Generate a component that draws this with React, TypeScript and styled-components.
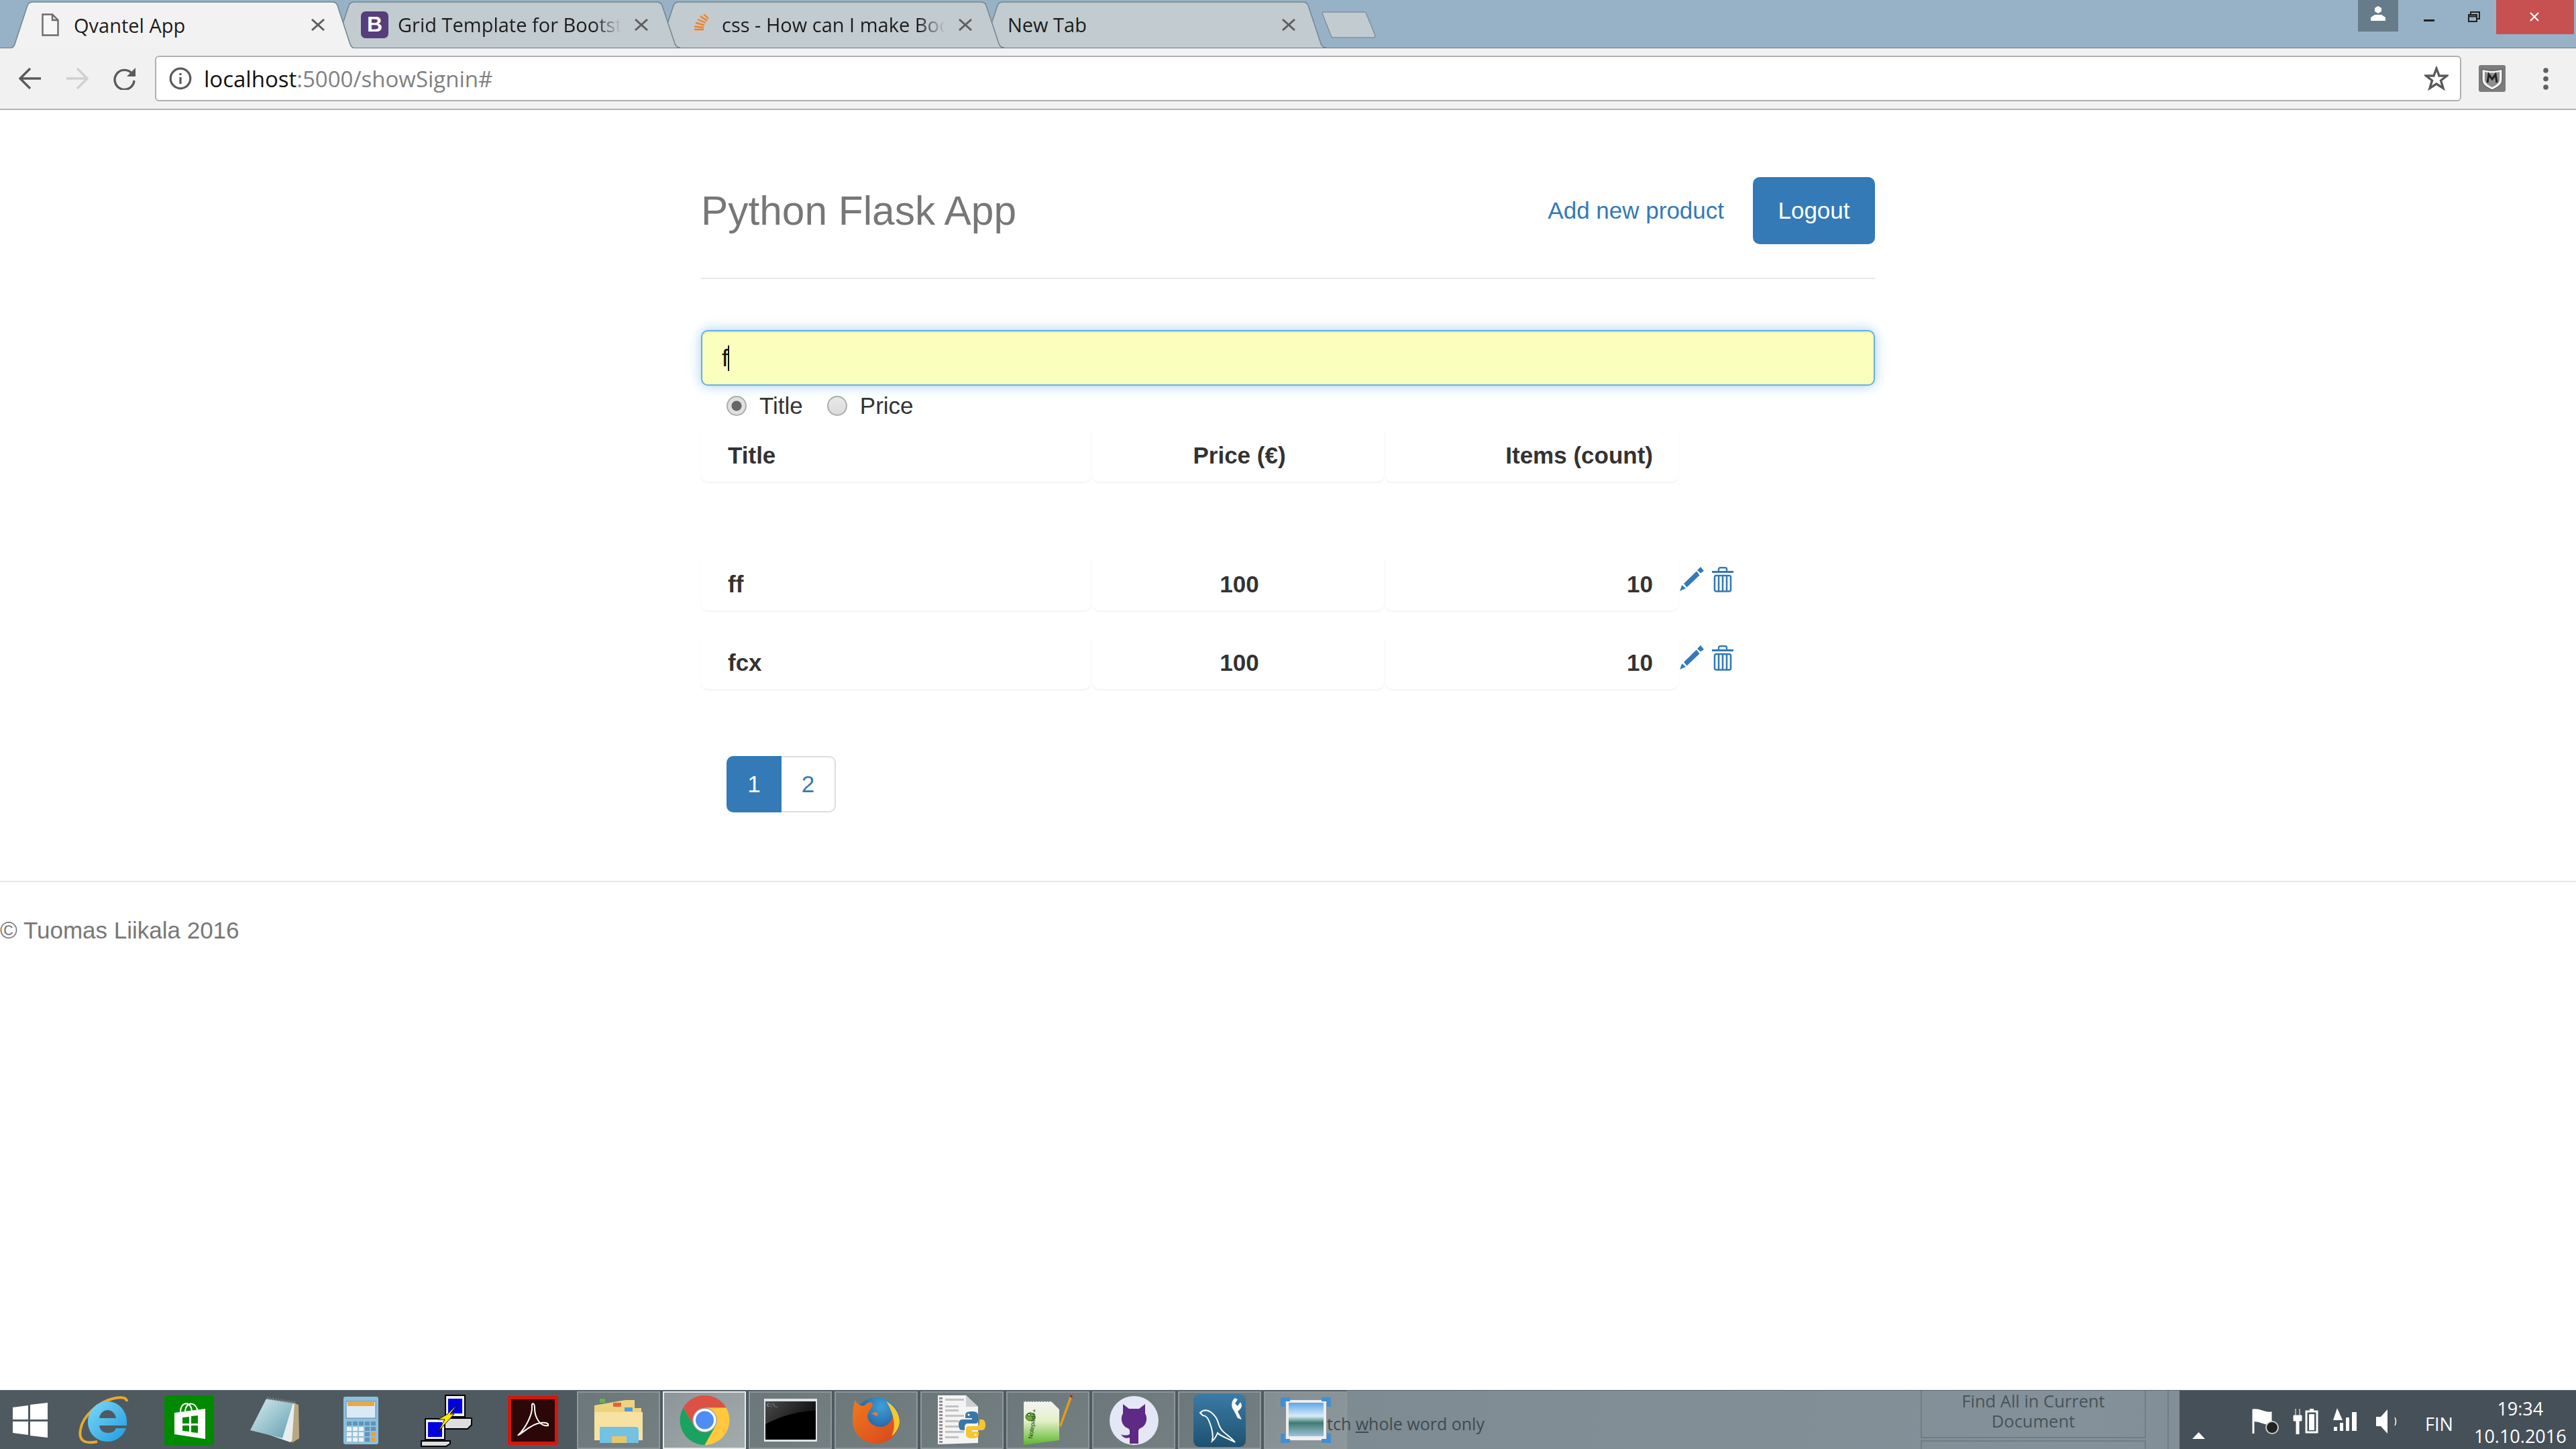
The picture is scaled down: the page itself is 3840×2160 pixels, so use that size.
import React from 'react';
import styled, { createGlobalStyle } from 'styled-components';

const Global = createGlobalStyle`
  html, body { margin: 0; padding: 0; background: #fff; }
  body { font-family: "Liberation Sans", Arial, sans-serif; color: #333; }
`;

const CHROME_FONT = '"Open Sans", "Noto Sans", sans-serif';

const Screen = styled.div`
  width: 3840px;
  height: 2160px;
  display: flex;
  flex-direction: column;
  overflow: hidden;
  background: #fff;
`;

/* ---------- browser chrome ---------- */

const TitleBar = styled.div`
  height: 71px;
  flex: none;
  display: flex;
  justify-content: space-between;
  align-items: flex-start;
  background: #97b2c6;
  border-bottom: 1px solid #67798a;
`;

const TabStrip = styled.div`
  height: 71px;
  display: flex;
  align-items: flex-end;
  padding-left: 14px;
`;

const Tab = styled.div<{ $w: number; $pad: number; $right: number; $z: number; $first?: boolean; $active?: boolean }>`
  position: relative;
  z-index: ${({ $z }) => $z};
  width: ${({ $w }) => $w}px;
  height: ${({ $active }) => ($active ? 70 : 69)}px;
  margin-left: ${({ $first }) => ($first ? 0 : -37)}px;
  margin-bottom: ${({ $active }) => ($active ? -1 : 0)}px;
  padding-left: ${({ $pad }) => $pad}px;
  padding-right: ${({ $right }) => $right}px;
  box-sizing: border-box;
  display: flex;
  align-items: center;
  font-family: ${CHROME_FONT};
  font-size: 29px;
  color: #1c1c1c;
`;

const TabShape = styled.svg`
  position: absolute;
  left: 0;
  top: 0;
`;

const TabTitle = styled.span<{ $fade?: boolean }>`
  position: relative;
  flex: 1;
  min-width: 0;
  white-space: nowrap;
  overflow: hidden;
  ${({ $fade }) =>
    $fade &&
    `-webkit-mask-image: linear-gradient(to right, #000 88%, transparent 100%);
     mask-image: linear-gradient(to right, #000 88%, transparent 100%);`}
`;

const TabClose = styled.svg`
  position: relative;
  flex: none;
  margin-left: 20px;
`;

const TabIcon = styled.svg<{ $gap: number }>`
  position: relative;
  flex: none;
  margin-right: ${({ $gap }) => $gap}px;
`;

const BootstrapMark = styled.span`
  position: relative;
  flex: none;
  width: 41px;
  height: 40px;
  margin-right: 14px;
  border-radius: 7px;
  background: #563d7c;
  color: #fff;
  display: flex;
  align-items: center;
  justify-content: center;
  font-family: "Liberation Sans", sans-serif;
  font-weight: 700;
  font-size: 32px;
`;

const NewTab = styled.svg`
  position: relative;
  z-index: 0;
  margin-left: -7px;
  margin-bottom: 14px;
`;

const WindowControls = styled.div`
  display: flex;
  align-items: flex-start;
  padding-right: 3px;
`;

const ProfileBox = styled.div`
  width: 60px;
  height: 47px;
  background: #677c8a;
  display: flex;
  justify-content: center;
  padding-top: 9px;
  box-sizing: border-box;
`;

const WinButton = styled.div<{ $w: number; $top: number; $left: number }>`
  width: ${({ $w }) => $w}px;
  height: 51px;
  box-sizing: border-box;
  padding: ${({ $top }) => $top}px 0 0 ${({ $left }) => $left}px;
  display: flex;
  align-items: flex-start;
`;

const CloseButton = styled(WinButton)`
  background: #c75050;
`;

const Toolbar = styled.div`
  height: 90px;
  flex: none;
  display: flex;
  align-items: center;
  padding-left: 28px;
  background: #f1f1f1;
  border-bottom: 2px solid #b3b3b3;
`;

const NavIcon = styled.svg`
  flex: none;
  margin-right: 36px;
`;

const Omnibox = styled.div`
  width: 3438px;
  height: 68px;
  margin-left: -8px;
  box-sizing: border-box;
  flex: none;
  display: flex;
  align-items: center;
  padding: 0 17px 0 19px;
  background: #fff;
  border: 2px solid #b0b0b0;
  border-radius: 6px;
`;

const Url = styled.span`
  flex: 1;
  margin-left: 18px;
  font-family: ${CHROME_FONT};
  font-size: 33px;
  color: #808080;
  white-space: nowrap;
`;

const Host = styled.span`
  color: #111;
`;

const ToolRight = styled.div`
  display: flex;
  align-items: center;
  margin-left: 26px;
`;

const MenuDots = styled.svg`
  margin-left: 56px;
`;

/* ---------- page ---------- */

const Page = styled.div`
  flex: 1;
  display: flex;
  flex-direction: column;
`;

const Container = styled.div`
  width: 1750px;
  margin: 0 auto;
`;

const Header = styled.header`
  padding: 100px 0 50px;
  display: flex;
  align-items: center;
  justify-content: space-between;
  border-bottom: 2px solid #e8e8e8;
`;

const Brand = styled.h3`
  margin: 0;
  font-size: 60.4px;
  font-weight: 400;
  color: #777;
`;

const Nav = styled.nav`
  display: flex;
  align-items: center;
  gap: 43px;
`;

const NavLink = styled.a`
  font-size: 35px;
  color: #337ab7;
`;

const LogoutButton = styled.a`
  width: 182px;
  height: 100px;
  display: flex;
  align-items: center;
  justify-content: center;
  background: #337ab7;
  border-radius: 10px;
  color: #fff;
  font-size: 35px;
`;

const SearchBox = styled.div`
  height: 83px;
  margin-top: 76px;
  box-sizing: border-box;
  padding-left: 29px;
  display: flex;
  align-items: center;
  background: #faffbd;
  border: 2px solid #66afe9;
  border-radius: 10px;
  box-shadow: inset 0 2px 2px rgba(0, 0, 0, 0.07), 0 0 18px rgba(102, 175, 233, 0.6);
  font-size: 35px;
  color: #111;
`;

const Caret = styled.span`
  width: 2px;
  height: 38px;
  margin-left: -1px;
  background: #111;
`;

const RadioRow = styled.div`
  height: 31px;
  margin-top: 14px;
  padding-left: 38px;
  display: flex;
  align-items: center;
  font-size: 35px;
  color: #333;
`;

const Radio = styled.span<{ $checked?: boolean }>`
  width: 30px;
  height: 30px;
  flex: none;
  box-sizing: border-box;
  margin-right: 19px;
  border-radius: 50%;
  border: 2px solid #adadad;
  background: ${({ $checked }) =>
    $checked
      ? 'radial-gradient(circle, #666 0 7px, #e0e0e0 8px)'
      : 'linear-gradient(#e9e9e9, #dadada)'};
`;

const RadioLabel = styled.span`
  margin-right: 36px;
`;

const Row = styled.div<{ $top: number }>`
  display: grid;
  grid-template-columns: 581px 435px 437px auto;
  column-gap: 2px;
  margin-top: ${({ $top }) => $top}px;
`;

const Cell = styled.div<{ $align: 'left' | 'center' | 'right' }>`
  height: 82px;
  box-sizing: border-box;
  padding: 3px ${({ $align }) => ($align === 'right' ? 38 : $align === 'center' ? 38 : 40)}px 0
    ${({ $align }) => ($align === 'center' ? 42 : 40)}px;
  display: flex;
  align-items: center;
  justify-content: ${({ $align }) =>
    $align === 'left' ? 'flex-start' : $align === 'center' ? 'center' : 'flex-end'};
  background: #fff;
  border-radius: 10px;
  box-shadow: 0 2px 3px rgba(0, 0, 0, 0.05);
  font-size: 35px;
  font-weight: 700;
  color: #333;
`;

const Actions = styled.div`
  height: 82px;
  display: flex;
  align-items: flex-start;
  gap: 12px;
  padding-top: 17px;
  box-sizing: border-box;
`;

const ActionIcon = styled.svg`
  flex: none;
`;

const Pagination = styled.div`
  display: flex;
  margin: 100px 0 0 38px;
  height: 84px;
  width: 163px;
`;

const PageLink = styled.a<{ $active?: boolean }>`
  flex: ${({ $active }) => ($active ? '0 0 82px' : '1')};
  display: flex;
  align-items: center;
  justify-content: center;
  box-sizing: border-box;
  font-size: 35px;
  color: ${({ $active }) => ($active ? '#fff' : '#337ab7')};
  background: ${({ $active }) => ($active ? '#337ab7' : '#fff')};
  border: 2px solid ${({ $active }) => ($active ? '#337ab7' : '#ddd')};
  border-left-width: ${({ $active }) => ($active ? 2 : 0)}px;
  border-radius: ${({ $active }) => ($active ? '10px 0 0 10px' : '0 10px 10px 0')};
`;

const Footer = styled.footer`
  margin-top: 102px;
  border-top: 2px solid #e5e5e5;
  padding-top: 48px;
  font-size: 35px;
  line-height: 48px;
  color: #777;
`;

/* ---------- taskbar ---------- */

const Taskbar = styled.div`
  height: 88px;
  flex: none;
  display: flex;
  border-top: 1px solid #5f6a70;
  box-sizing: border-box;
`;

const TaskList = styled.div`
  width: 2008px;
  flex: none;
  display: flex;
  gap: 4px;
  background: #4e5a60;
  padding-top: 1px;
`;

const StartSlot = styled.div`
  width: 88px;
  flex: none;
  box-sizing: border-box;
  display: flex;
  align-items: center;
  justify-content: center;
  padding-left: 2px;
`;

const TILE_BG = {
  idle: 'transparent',
  open: 'linear-gradient(135deg, #6c777b, #747f81)',
  active: 'linear-gradient(135deg, #8c9598, #a3abad)',
  peek: 'linear-gradient(135deg, #838e93, #8d989c)',
};

const Tile = styled.div<{ $tone: keyof typeof TILE_BG }>`
  width: 124px;
  flex: none;
  box-sizing: border-box;
  display: flex;
  align-items: center;
  justify-content: center;
  background: ${({ $tone }) => TILE_BG[$tone]};
  border: ${({ $tone }) =>
    $tone === 'idle'
      ? 'none'
      : $tone === 'active'
        ? '2px solid #e6e9ea'
        : '2px solid #8e989b'};
`;

const Backdrop = styled.div`
  flex: 1;
  display: flex;
  background: linear-gradient(100deg, #7e8b92, #84919a 60%, #76848c);
  font-family: ${CHROME_FONT};
  color: #475359;
`;

const PeekText = styled.span`
  position: relative;
  margin: 32px 0 0 -30px;
  width: 885px;
  flex: none;
  font-size: 25px;
  white-space: nowrap;
  color: #3f4a50;
  u { text-decoration: underline; }
`;

const FindColumn = styled.div`
  width: 336px;
  flex: none;
  display: flex;
  flex-direction: column;
  gap: 3px;
`;

const FindBox = styled.div`
  height: 71px;
  box-sizing: border-box;
  border: 2px solid #707d84;
  border-top: none;
  font-size: 25.5px;
  line-height: 30px;
  text-align: center;
`;

const FindStub = styled.div`
  flex: 1;
  border: 2px solid #707d84;
  border-bottom: none;
`;

const SideRule = styled.div`
  width: 2px;
  flex: none;
  margin-left: 32px;
  background: #707d84;
`;

const Tray = styled.div`
  margin-left: auto;
  width: 591px;
  flex: none;
  display: flex;
  background: #465058;
  color: #fff;
  font-family: ${CHROME_FONT};
`;

const TrayGlyph = styled.svg<{ $left: number; $top: number }>`
  flex: none;
  margin: ${({ $top }) => $top}px 0 0 ${({ $left }) => $left}px;
`;

const TrayLang = styled.span`
  margin: 31px 0 0 39px;
  font-size: 27px;
`;

const Clock = styled.div`
  margin: 6px 0 0 31px;
  width: 138px;
  text-align: center;
  font-size: 27px;
  line-height: 41px;
`;

/* ---------- drawings ---------- */

const tabPath = (w: number, h: number) =>
  `M0 ${h} Q6 ${h} 8 ${h - 6} L27 6 Q29 1 35 1 H${w - 35} Q${w - 29} 1 ${w - 27} 6 L${w - 8} ${h - 6} Q${w - 6} ${h} ${w} ${h}`;

const CloseX = ({ color = '#5f5f5f' }: { color?: string }) => (
  <TabClose width="20" height="18" viewBox="0 0 20 18">
    <path d="M1 1 L19 17 M19 1 L1 17" stroke={color} strokeWidth="3" fill="none" />
  </TabClose>
);

const TaskIE = () => (
  <svg width="74" height="72" viewBox="0 0 74 72">
    <defs>
      <linearGradient id="ie" x1="0" y1="0" x2="1" y2="1">
        <stop offset="0" stopColor="#7fd8f7" />
        <stop offset="1" stopColor="#1c9be0" />
      </linearGradient>
    </defs>
    <path d="M28 68 C8 72 0 66 3 50 C6 30 30 8 55 3 C66 1 72 3 72 8" fill="none" stroke="#e6a92e" strokeWidth="4" />
    <path
      fillRule="evenodd"
      d="M14 38 A29 30 0 0 1 72 38 V44 H31 C32 52 38 55 44 55 C50 55 54 53 56 48 H71 C67 60 56 68 44 68 C26 68 14 55 14 38 Z M31 33 H56 C55 26 50 21 43.5 21 C37 21 32 26 31 33 Z"
      fill="url(#ie)"
    />
  </svg>
);

const TaskStore = () => (
  <svg width="74" height="75" viewBox="0 0 74 75">
    <rect width="74" height="75" fill="#008a00" />
    <path d="M24 25 C24 8 41 8 41 25 M31 25 C31 8 50 8 50 28" fill="none" stroke="#fff" strokeWidth="2" />
    <path d="M15 26 L61 20 V65 L15 58 Z" fill="#fff" />
    <path d="M27 33 L37 32 V42 H27 Z M40 31 L50 30 V42 H40 Z M27 45 H37 V54 L27 53 Z M40 45 H50 V56 L40 55 Z" fill="#008a00" />
  </svg>
);

const TaskNotepad = () => (
  <svg width="74" height="70" viewBox="0 0 74 70">
    <defs>
      <linearGradient id="np" x1="0" y1="0" x2="1" y2="1">
        <stop offset="0" stopColor="#dcecef" />
        <stop offset="1" stopColor="#5fa0b2" />
      </linearGradient>
    </defs>
    <path d="M26 4 L68 10 L70 60 L60 68 L20 54 Z" fill="#e8eef0" />
    <path d="M66 10 L72 12 L73 62 L62 69 Z" fill="#b9a782" />
    <path d="M24 3 L64 9 L48 62 L0 50 Z" fill="url(#np)" />
    <path d="M25 2 L67 9" stroke="#777" strokeWidth="4" strokeDasharray="2 2" />
  </svg>
);

const TaskCalc = () => (
  <svg width="52" height="71" viewBox="0 0 52 71">
    <rect width="52" height="71" rx="3" fill="#8dc0df" />
    <rect x="4" y="7" width="44" height="25" fill="#dbe9f6" stroke="#5a86a8" />
    <rect x="6" y="8" width="40" height="6" fill="#f0a640" />
    {[0, 1, 2, 3].map((r) =>
      [0, 1, 2, 3, 4].map((c) => (
        <rect
          key={`${r}-${c}`}
          x={5 + c * 9}
          y={37 + r * 8}
          width="7"
          height="6"
          fill={c === 4 && r > 1 ? '#f0a030' : r > 0 && c < 3 ? '#eef2f5' : '#5f93b8'}
        />
      )),
    )}
  </svg>
);

const TaskNetwork = () => (
  <svg width="78" height="79" viewBox="0 0 78 79">
    <path d="M37 2 H66 V34 H37 Z" fill="#eee" stroke="#000" strokeWidth="2" />
    <rect x="41" y="7" width="21" height="22" fill="#0000e0" />
    <path d="M36 36 H76 V46 L70 52 H36 Z" fill="#ddd" stroke="#000" strokeWidth="2" />
    <path d="M7 37 H36 V68 H7 Z" fill="#eee" stroke="#000" strokeWidth="2" />
    <rect x="11" y="42" width="21" height="22" fill="#0000e0" />
    <path d="M1 70 H44 V74 L38 78 H1 Z" fill="#ddd" stroke="#000" strokeWidth="2" />
    <path d="M56 14 L44 30 L50 30 L26 56 L36 38 L26 38 L40 30 Z" fill="#ffe600" stroke="#111" />
  </svg>
);

const TaskAcrobat = () => (
  <svg width="75" height="73" viewBox="0 0 75 73">
    <rect x="2.5" y="2.5" width="70" height="68" fill="#2b0707" stroke="#d5160e" strokeWidth="5" />
    <path d="M16 58 C24 50 37 30 36 16 C35 9 40 10 40 18 C40 32 48 46 60 44 C62 38 46 38 34 46 C26 50 18 58 16 58 Z" fill="none" stroke="#fff" strokeWidth="2" />
  </svg>
);

const TaskExplorer = () => (
  <svg width="72" height="68" viewBox="0 0 72 68">
    <path d="M0 12 L46 4 H60 V16 H70 V64 H0 Z" fill="#efd27d" />
    <rect x="8" y="2" width="8" height="6" fill="#66b055" />
    <rect x="28" y="8" width="12" height="6" fill="#e2623d" />
    <rect x="45" y="15" width="12" height="6" fill="#4a9de0" />
    <path d="M0 22 H72 V64 H0 Z" fill="#f7e2a2" />
    <path d="M8 44 H62 Q66 44 66 50 V68 H48 V58 H26 V68 H8 Z" fill="#73c1e3" />
    <rect x="26" y="58" width="22" height="10" fill="#e8c768" />
  </svg>
);

const TaskChrome = () => (
  <svg width="75" height="74" viewBox="0 0 74 74">
    <path d="M5 18.5 A37 37 0 0 1 69 18.5 H37 A18.5 18.5 0 0 0 21 46 Z" fill="#dd5144" />
    <path d="M5 18.5 L21 46 A18.5 18.5 0 0 0 53 46 L37 74 A37 37 0 0 1 5 18.5 Z" fill="#1aa260" />
    <path d="M69 18.5 H37 A18.5 18.5 0 0 1 53 46 L37 74 A37 37 0 0 0 69 18.5 Z" fill="#ffc83d" />
    <circle cx="37" cy="37" r="17" fill="#fff" />
    <circle cx="37" cy="37" r="13.5" fill="#4e8df5" />
  </svg>
);

const TaskCmd = () => (
  <svg width="79" height="64" viewBox="0 0 79 64">
    <defs>
      <linearGradient id="cmd" x1="0" y1="0" x2="1" y2="0.4">
        <stop offset="0" stopColor="#4a4a4a" />
        <stop offset="1" stopColor="#111" />
      </linearGradient>
    </defs>
    <rect width="79" height="64" fill="#dfe3e4" />
    <rect x="2" y="4" width="75" height="57" fill="#000" />
    <path d="M2 4 H77 V18 C50 18 20 28 2 38 Z" fill="url(#cmd)" />
    <text x="4" y="12" fontSize="7" fontFamily="Liberation Mono, monospace" fill="#bbb">C:\_</text>
  </svg>
);

const TaskFirefox = () => (
  <svg width="75" height="73" viewBox="0 0 75 73">
    <defs>
      <radialGradient id="ffb" cx="0.6" cy="0.2" r="0.8">
        <stop offset="0" stopColor="#3fa0d8" />
        <stop offset="1" stopColor="#143f80" />
      </radialGradient>
      <linearGradient id="ffo" x1="0" y1="0" x2="1" y2="1">
        <stop offset="0" stopColor="#ef7a1f" />
        <stop offset="1" stopColor="#d8441a" />
      </linearGradient>
    </defs>
    <circle cx="38" cy="36" r="34" fill="url(#ffb)" />
    <path d="M6 6 C8 12 14 16 20 14 C26 8 32 8 32 14 C30 18 28 20 26 24 C20 34 30 46 44 46 C54 46 60 38 62 30 L72 36 C72 56 56 71 37 71 C18 71 2 56 2 36 C2 24 3 14 6 6 Z" fill="url(#ffo)" />
    <path d="M52 8 C64 14 72 26 72 38 C72 46 66 56 60 60 C66 48 66 30 52 8 Z" fill="#f8c630" />
    <path d="M30 26 C38 22 42 26 38 30 Z" fill="#f07a2a" />
  </svg>
);

const TaskPython = () => (
  <svg width="72" height="76" viewBox="0 0 72 76">
    <path d="M0 1 H42 L60 18 V72 L0 74 Z" fill="#f4f4f4" />
    <path d="M42 1 V18 H60 Z" fill="#cfcfcf" />
    {[4, 9, 14, 19, 24, 29, 34, 39, 44, 49, 54, 59, 64, 69].map((y) => (
      <rect key={y} x="2" y={y} width="5" height="3" fill="#8f8f8f" />
    ))}
    {[6, 16, 22, 30, 38, 46, 54, 62].map((y, i) => (
      <rect key={y} x="11" y={y} width={i % 3 === 0 ? 28 : 20} height="3" fill="#c2c2c2" />
    ))}
    <g transform="translate(31 25)">
      <path d="M20 0 C12 0 10 2 10 6 V10 H20 V12 H5 C1 12 0 16 0 20 C0 25 2 28 5 28 H9 V23 C9 20 11 18 14 18 H25 C28 18 29 16 29 14 V6 C29 2 26 0 20 0 Z" fill="#3a77a8" />
      <path d="M20 0 C12 0 10 2 10 6 V10 H20 V12 H5 C1 12 0 16 0 20 C0 25 2 28 5 28 H9 V23 C9 20 11 18 14 18 H25 C28 18 29 16 29 14 V6 C29 2 26 0 20 0 Z" fill="#f7c530" transform="rotate(180 20 20)" />
      <circle cx="15" cy="5" r="1.6" fill="#fff" />
      <circle cx="25" cy="35" r="1.6" fill="#fff" />
    </g>
  </svg>
);

const TaskNpp = () => (
  <svg width="74" height="76" viewBox="0 0 74 76">
    <defs>
      <linearGradient id="npp" x1="0" y1="0" x2="0" y2="1">
        <stop offset="0" stopColor="#f4f4f4" />
        <stop offset="0.45" stopColor="#e3f0c8" />
        <stop offset="1" stopColor="#5cb62b" />
      </linearGradient>
    </defs>
    <path d="M1 10 L42 10 L54 22 L54 68 L1 75 Z" fill="url(#npp)" />
    <path d="M1 10 H42" stroke="#888" strokeWidth="2" strokeDasharray="2 2" />
    <path d="M54 46 L70 2 L73 4 L57 48 Z" fill="#e49a18" />
    <path d="M70 0 L74 2 L73 5 L70 3 Z" fill="#b0202a" />
    <ellipse cx="11" cy="33" rx="7" ry="6" fill="#6fae2f" stroke="#2c5c1a" />
    <circle cx="9" cy="30" r="2" fill="#fff" stroke="#222" />
    <text x="0" y="0" fontSize="9" fontFamily="Liberation Sans, sans-serif" fill="#1d3a10" transform="translate(14 66) rotate(-82)">Notepad++</text>
  </svg>
);

const TaskGithub = () => (
  <svg width="73" height="73" viewBox="0 0 73 73">
    <circle cx="36.5" cy="36.5" r="36.5" fill="#e4e8f6" />
    <path d="M20 12 L29 19 H44 L53 12 V26 C57 32 56 44 46 48 C44 49 43 50 43 53 V71 H30 V62 C24 64 20 62 17 57 C21 59 26 59 30 57 V52 C30 50 29 49 27 48 C17 44 16 32 20 26 Z" fill="#5f2a85" />
  </svg>
);

const TaskMysql = () => (
  <svg width="78" height="79" viewBox="0 0 78 79">
    <defs>
      <linearGradient id="my" x1="0" y1="0" x2="0" y2="1">
        <stop offset="0" stopColor="#3a7ba6" />
        <stop offset="1" stopColor="#1f5170" />
      </linearGradient>
    </defs>
    <rect width="78" height="79" rx="9" fill="url(#my)" />
    <path d="M10 28 C20 18 34 30 38 46 C42 58 52 60 62 72 C52 66 42 64 36 58 C32 68 30 68 28 70 C30 62 28 52 24 42 C22 36 18 32 14 32 Z" fill="none" stroke="#fff" strokeWidth="2" />
    <path d="M62 6 L66 8 L62 14 L66 18 L70 12 L72 16 C72 22 68 24 66 26 L72 38 L66 36 L60 24 C56 20 56 10 62 6 Z" fill="#fff" />
  </svg>
);

const TaskImage = () => (
  <svg width="75" height="68" viewBox="0 0 75 68">
    <defs>
      <linearGradient id="im" x1="0" y1="0" x2="0" y2="1">
        <stop offset="0" stopColor="#5fa7ea" />
        <stop offset="0.4" stopColor="#d8ecf7" />
        <stop offset="0.6" stopColor="#3f7a70" />
        <stop offset="1" stopColor="#9fc2de" />
      </linearGradient>
    </defs>
    <rect x="8" y="4" width="60" height="60" fill="#eee" />
    <rect x="12" y="8" width="52" height="50" fill="url(#im)" />
    <path d="M0 14 V0 H14 V6 H6 V14 Z M75 14 V0 H61 V6 H69 V14 Z M0 54 V68 H14 V62 H6 V54 Z M75 54 V68 H61 V62 H69 V54 Z" fill="#3f8fd2" />
  </svg>
);

const TABS = [
  { title: 'Qvantel App', w: 516, pad: 48, right: 46 },
  { title: 'Grid Template for Bootstrap', w: 521, pad: 45, right: 48, fade: true },
  { title: 'css - How can I make Bootstrap', w: 520, pad: 52, right: 48, fade: true },
  { title: 'New Tab', w: 517, pad: 42, right: 46 },
];

const PRODUCTS = [
  { title: 'ff', price: 100, count: 10, top: 110 },
  { title: 'fcx', price: 100, count: 10, top: 35 },
];

function Pencil() {
  return (
    <ActionIcon width="36" height="36" viewBox="0 0 36 36">
      <path
        d="M0 36 L3.3 27 L9 32 Z M6 25 L25 6.5 L29.5 12.5 L10.5 30.5 Z M26 5 L31 0 L36 6 L31 9.5 Z"
        fill="#337ab7"
      />
    </ActionIcon>
  );
}

function Trash() {
  return (
    <ActionIcon width="32" height="38" viewBox="0 0 32 38">
      <path d="M0 7.5 H32" stroke="#337ab7" strokeWidth="3" />
      <path d="M10 6 V3.5 Q10 1.2 12.5 1.2 H19.5 Q22 1.2 22 3.5 V6" stroke="#337ab7" strokeWidth="2.4" fill="none" />
      <rect x="4" y="13" width="24" height="23.5" rx="2.5" fill="none" stroke="#337ab7" strokeWidth="2.6" />
      <path d="M10 13 V36 M16 13 V36 M22 13 V36" stroke="#337ab7" strokeWidth="2.6" />
    </ActionIcon>
  );
}

export default function App() {
  return (
    <Screen>
      <Global />
      <TitleBar>
        <TabStrip>
          {TABS.map((t, i) => {
            const h = i === 0 ? 70 : 69;
            return (
              <Tab
                key={t.title}
                $w={t.w}
                $pad={t.pad}
                $right={t.right}
                $z={i === 0 ? 9 : 5 - i}
                $first={i === 0}
                $active={i === 0}
              >
                <TabShape width={t.w} height={h} viewBox={`0 0 ${t.w} ${h}`}>
                  <path
                    d={tabPath(t.w, h)}
                    fill={i === 0 ? '#f2f2f2' : '#c2cbcf'}
                    stroke="#74858f"
                    strokeWidth="1.5"
                  />
                </TabShape>
                {i === 0 && (
                  <TabIcon $gap={22} width="26" height="34" viewBox="0 0 26 34">
                    <path d="M1.5 1.5 H16 L24.5 10 V32.5 H1.5 Z M16 1.5 V10 H24.5" fill="#f8f8f8" stroke="#6a6a6a" strokeWidth="2.4" />
                  </TabIcon>
                )}
                {i === 1 && <BootstrapMark>B</BootstrapMark>}
                {i === 2 && (
                  <TabIcon $gap={19} width="28" height="32" viewBox="0 0 28 32">
                    <path d="M2 22 V31 H25 V22" fill="#c9c9c9" />
                    <path d="M6 23 H20 M6 18.5 L20 20 M8 13 L21 16.5 M11 8 L23 13 M15 3 L25 10 M20 0 L27 7" stroke="#f48024" strokeWidth="2.4" fill="none" />
                  </TabIcon>
                )}
                <TabTitle $fade={t.fade}>{t.title}</TabTitle>
                <CloseX />
              </Tab>
            );
          })}
          <NewTab width="81" height="40" viewBox="0 0 81 40">
            <path d="M1 3 Q1 1 4 1 H64 Q66 1 67 4 L80 36 Q80 39 77 39 H17 Q15 39 14 36 Z" fill="#c2cbcf" stroke="#7d93a3" strokeWidth="1.5" />
          </NewTab>
        </TabStrip>
        <WindowControls>
          <ProfileBox>
            <svg width="22" height="22" viewBox="0 0 22 22">
              <path d="M11 0 L16 3 L16 8 L11 11 L6 8 L6 3 Z M0 22 V17 L6 13 H16 L22 17 V22 Z" fill="#fff" />
            </svg>
          </ProfileBox>
          <WinButton $w={93} $top={29} $left={38}>
            <svg width="16" height="3" viewBox="0 0 16 3">
              <rect width="16" height="3" fill="#222" />
            </svg>
          </WinButton>
          <WinButton $w={53} $top={17} $left={11}>
            <svg width="18" height="16" viewBox="0 0 18 16">
              <path d="M1 5 H13 V15 H1 Z M1 7.5 H13 M4 4 V1 H17 V11 H14" fill="none" stroke="#222" strokeWidth="2" />
            </svg>
          </WinButton>
          <CloseButton $w={116} $top={18} $left={50}>
            <svg width="14" height="14" viewBox="0 0 14 14">
              <path d="M1 1 L13 13 M13 1 L1 13" stroke="#fff" strokeWidth="2.2" />
            </svg>
          </CloseButton>
        </WindowControls>
      </TitleBar>

      <Toolbar>
        <NavIcon width="34" height="32" viewBox="0 0 34 32">
          <path d="M33 16 H3 M17 1 L2 16 L17 31" fill="none" stroke="#5a5a5a" strokeWidth="3.4" />
        </NavIcon>
        <NavIcon width="34" height="32" viewBox="0 0 34 32">
          <path d="M1 16 H31 M17 1 L32 16 L17 31" fill="none" stroke="#d0d0d0" strokeWidth="3.4" />
        </NavIcon>
        <NavIcon width="35" height="34" viewBox="0 0 35 34">
          <path d="M29 10 A14.5 14.5 0 1 0 32 20" fill="none" stroke="#5a5a5a" strokeWidth="3.4" />
          <path d="M34 1 V14 H21 Z" fill="#5a5a5a" />
        </NavIcon>
        <Omnibox>
          <svg width="34" height="34" viewBox="0 0 34 34">
            <circle cx="17" cy="17" r="14.8" fill="none" stroke="#5a5a5a" strokeWidth="3.2" />
            <path d="M17 15 V25 M17 9 V12" stroke="#5a5a5a" strokeWidth="3.2" />
          </svg>
          <Url>
            <Host>localhost</Host>:5000/showSignin#
          </Url>
          <svg width="36" height="36" viewBox="0 0 36 36">
            <path d="M18 3 L22 14 H33.5 L24.5 21 L28 32.5 L18 26 L8 32.5 L11.5 21 L2.5 14 H14 Z" fill="none" stroke="#5a5a5a" strokeWidth="3.4" />
          </svg>
        </Omnibox>
        <ToolRight>
          <svg width="40" height="40" viewBox="0 0 40 40">
            <rect width="40" height="40" rx="3" fill="#7c7c7c" />
            <path d="M5 6 C14 9 26 9 35 6 V22 C35 30 26 34 20 37 C14 34 5 30 5 22 Z" fill="#f3f3f3" stroke="#444" />
            <path d="M9 10 C16 12 24 12 31 10 V22 C31 27 24 31 20 33 C16 31 9 27 9 22 Z" fill="#8d8d8d" />
            <path d="M13 26 L15 14 L20 21 L25 14 L27 26" fill="none" stroke="#222" strokeWidth="3" />
          </svg>
          <MenuDots width="8" height="33" viewBox="0 0 8 33">
            <circle cx="4" cy="4" r="3.8" fill="#5f5f5f" />
            <circle cx="4" cy="16.5" r="3.8" fill="#5f5f5f" />
            <circle cx="4" cy="29" r="3.8" fill="#5f5f5f" />
          </MenuDots>
        </ToolRight>
      </Toolbar>

      <Page>
        <Container>
          <Header>
            <Brand>Python Flask App</Brand>
            <Nav>
              <NavLink>Add new product</NavLink>
              <LogoutButton>Logout</LogoutButton>
            </Nav>
          </Header>
          <SearchBox>
            f<Caret />
          </SearchBox>
          <RadioRow>
            <Radio $checked />
            <RadioLabel>Title</RadioLabel>
            <Radio />
            <span>Price</span>
          </RadioRow>
          <Row $top={16}>
            <Cell $align="left">Title</Cell>
            <Cell $align="center">Price (€)</Cell>
            <Cell $align="right">Items (count)</Cell>
          </Row>
          {PRODUCTS.map((p) => (
            <Row key={p.title} $top={p.top}>
              <Cell $align="left">{p.title}</Cell>
              <Cell $align="center">{p.price}</Cell>
              <Cell $align="right">{p.count}</Cell>
              <Actions>
                <Pencil />
                <Trash />
              </Actions>
            </Row>
          ))}
          <Pagination>
            <PageLink $active>1</PageLink>
            <PageLink>2</PageLink>
          </Pagination>
        </Container>
        <Footer>© Tuomas Liikala 2016</Footer>
      </Page>

      <Taskbar>
        <TaskList>
          <StartSlot>
            <svg width="52" height="52" viewBox="0 0 52 52">
              <path d="M0 7 L23 4 V25 H0 Z M26 3 L52 0 V25 H26 Z M0 28 H23 V48 L0 45 Z M26 28 H52 V52 L26 49 Z" fill="#fff" />
            </svg>
          </StartSlot>
          <Tile $tone="idle"><TaskIE /></Tile>
          <Tile $tone="idle"><TaskStore /></Tile>
          <Tile $tone="idle"><TaskNotepad /></Tile>
          <Tile $tone="idle"><TaskCalc /></Tile>
          <Tile $tone="idle"><TaskNetwork /></Tile>
          <Tile $tone="idle"><TaskAcrobat /></Tile>
          <Tile $tone="open"><TaskExplorer /></Tile>
          <Tile $tone="active"><TaskChrome /></Tile>
          <Tile $tone="open"><TaskCmd /></Tile>
          <Tile $tone="open"><TaskFirefox /></Tile>
          <Tile $tone="open"><TaskPython /></Tile>
          <Tile $tone="open"><TaskNpp /></Tile>
          <Tile $tone="open"><TaskGithub /></Tile>
          <Tile $tone="open"><TaskMysql /></Tile>
          <Tile $tone="peek"><TaskImage /></Tile>
        </TaskList>
        <Backdrop>
          <PeekText>
            tch <u>w</u>hole word only
          </PeekText>
          <FindColumn>
            <FindBox>
              Find All in Current
              <br />
              Document
            </FindBox>
            <FindStub />
          </FindColumn>
          <SideRule />
          <Tray>
            <TrayGlyph $left={19} $top={62} width="19" height="10" viewBox="0 0 19 10">
              <path d="M9.5 0 L19 10 H0 Z" fill="#fff" />
            </TrayGlyph>
            <TrayGlyph $left={70} $top={27} width="40" height="38" viewBox="0 0 40 38">
              <path d="M2 1 V37 M2 2 C12 0 18 8 28 6 V22 C18 24 12 16 2 18 Z" fill="#fff" stroke="#fff" strokeWidth="3" />
              <circle cx="30" cy="28" r="9" fill="#222" stroke="#ccc" strokeWidth="2" />
            </TrayGlyph>
            <TrayGlyph $left={21} $top={27} width="39" height="38" viewBox="0 0 39 38">
              <path d="M4 0 V10 M10 0 V10 M1 10 H13 V18 H9 V38 H5 V18 H1 Z" fill="#fff" stroke="#fff" />
              <rect x="20" y="4" width="16" height="31" fill="none" stroke="#fff" strokeWidth="3" />
              <rect x="24" y="8" width="8" height="24" fill="#fff" />
              <rect x="25" y="0" width="6" height="4" fill="#fff" />
            </TrayGlyph>
            <TrayGlyph $left={21} $top={26} width="38" height="34" viewBox="0 0 38 34">
              <path d="M6 0 L14 18 H0 Z" fill="#fff" />
              <path d="M1 28 H6 V34 H1 Z M10 22 H15 V34 H10 Z M19 14 H24 V34 H19 Z M28 6 H35 V34 H28 Z" fill="#fff" />
            </TrayGlyph>
            <TrayGlyph $left={25} $top={27} width="35" height="38" viewBox="0 0 35 38">
              <path d="M1 12 H8 L18 1 V37 L8 26 H1 Z" fill="#fff" />
              <path d="M29 13 Q32 19 29 25" stroke="#fff" strokeWidth="1.5" fill="none" />
            </TrayGlyph>
            <TrayLang>FIN</TrayLang>
            <Clock>
              19:34
              <br />
              10.10.2016
            </Clock>
          </Tray>
        </Backdrop>
      </Taskbar>
    </Screen>
  );
}
